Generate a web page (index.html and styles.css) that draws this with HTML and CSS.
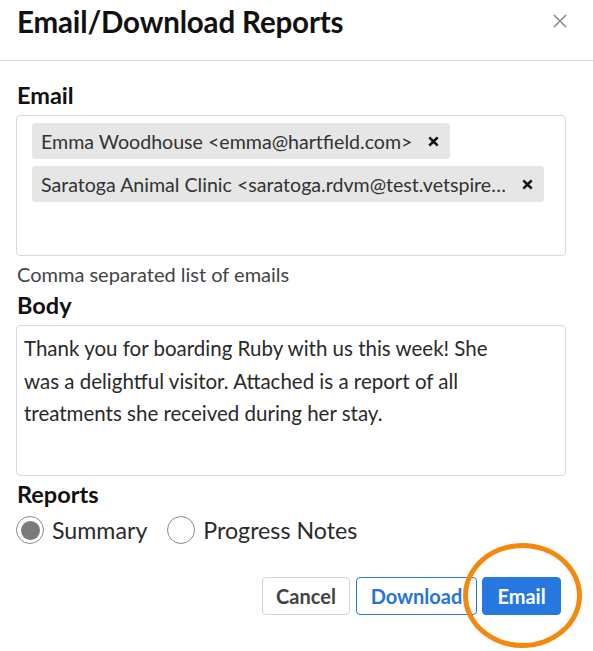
FILE: index.html
```html
<!DOCTYPE html>
<html>
<head>
<meta charset="utf-8">
<link rel="stylesheet" href="styles.css">
</head>
<body>
<div class="modal">
  <header class="head">
    <h1 class="title">Email/Download Reports</h1>
    <span class="close"><svg width="14" height="14" viewBox="0 0 14 14"><path d="M1 1L13 13M13 1L1 13" stroke="#8a8a8a" stroke-width="1.6"/></svg></span>
  </header>
  <div class="content">
    <div class="label">Email</div>
    <div class="box emails">
      <span class="chip"><span class="chip-text">Emma Woodhouse &lt;emma@hartfield.com&gt;</span><svg class="x" width="11" height="11" viewBox="0 0 11 11"><path d="M1.3 1.3L9.7 9.7M9.7 1.3L1.3 9.7" stroke="#111" stroke-width="2.6"/></svg></span>
      <span class="chip"><span class="chip-text">Saratoga Animal Clinic &lt;saratoga.rdvm@test.vetspire…</span><svg class="x" width="11" height="11" viewBox="0 0 11 11"><path d="M1.3 1.3L9.7 9.7M9.7 1.3L1.3 9.7" stroke="#111" stroke-width="2.6"/></svg></span>
    </div>
    <div class="help">Comma separated list of emails</div>
    <div class="label label-body">Body</div>
    <div class="box body">Thank you for boarding Ruby with us this week! She was a delightful visitor. Attached is a report of all treatments she received during her stay.</div>
    <div class="label">Reports</div>
    <div class="radios">
      <span class="radio"><span class="dot on"></span>Summary</span>
      <span class="radio"><span class="dot"></span>Progress Notes</span>
    </div>
    <div class="actions">
      <button class="btn cancel">Cancel</button>
      <button class="btn download">Download</button>
      <button class="btn email">Email</button>
      <span class="ring"></span>
    </div>
  </div>
</div>
</body>
</html>
```
FILE: styles.css
```css
* { box-sizing: border-box; }
html, body { margin: 0; padding: 0; background: #fff; }
body { font-family: Lato, "Open Sans", sans-serif; color: #222; width: 593px; height: 651px; overflow: hidden; }
.head { display: flex; align-items: flex-start; justify-content: space-between; padding: 4px 26px 0 17px; height: 61px; border-bottom: 1px solid #dcdcdc; }
.title { margin: 0; font-size: 29.5px; font-weight: 700; color: #111; line-height: 36px; letter-spacing: -0.15px; }
.close { padding-top: 10px; display: flex; }
.content { padding: 20px 27px 0 16px; }
.label { font-size: 23.5px; font-weight: 700; color: #111; line-height: 28px; padding-left: 1px; }
.box { border: 1px solid #d9d9d9; border-radius: 4px; width: 550px; margin-top: 6px; }
.emails { height: 141px; padding: 7px 15px; display: flex; flex-direction: column; align-items: flex-start; gap: 7px; }
.chip { display: inline-flex; align-items: center; background: #e6e6e6; border-radius: 3px; height: 36px; padding: 0 11px 0 9px; font-size: 19.6px; color: #333; white-space: nowrap; }
.x { margin-left: 16px; flex: none; }
.help { font-size: 20px; color: #444; margin-top: 6px; line-height: 24px; padding-left: 1px; }
.label-body { margin-top: 5px; }
.body { height: 151px; padding: 6px 53px 6px 7px; font-size: 20.5px; line-height: 32.5px; color: #2a2a2a; margin-top: 6px; margin-bottom: 4px; }
.radios { display: flex; gap: 20px; margin-top: 7px; font-size: 23.2px; color: #2a2a2a; height: 30px; }
.radio { display: inline-flex; align-items: center; gap: 8px; }
.dot { width: 28px; height: 28px; border-radius: 50%; border: 1.5px solid #8a8a8a; display: inline-flex; align-items: center; justify-content: center; background: #fff; }
.dot.on::after { content: ""; width: 19px; height: 19px; border-radius: 50%; background: #7a7a7a; }
.actions { position: relative; display: flex; justify-content: flex-end; gap: 5px; margin-top: 32px; padding-right: 5px; }
.btn { font-family: inherit; font-size: 20px; font-weight: 700; height: 38px; border-radius: 4px; padding: 0; cursor: pointer; }
.cancel { background: #fff; border: 1px solid #d4d4d4; color: #444; width: 88px; margin-right: 1px; }
.download { background: #fff; border: 1px solid #2a77dd; color: #2474de; width: 121px; }
.email { background: #2677e0; border: 1px solid #2677e0; color: #fff; width: 79px; }
.ring { position: absolute; right: -16px; top: -34px; width: 119px; height: 105px; border: 5px solid #f5870c; border-radius: 50%; pointer-events: none; }
```
